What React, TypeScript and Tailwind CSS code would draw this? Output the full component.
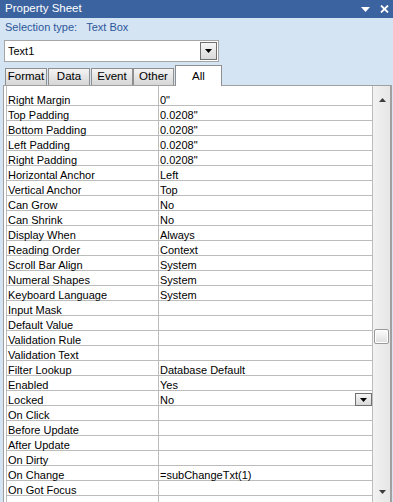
import React from "react";

const rows: { label: string; value: string; combo?: boolean }[] = [
  { label: "Right Margin", value: "0\"" },
  { label: "Top Padding", value: "0.0208\"" },
  { label: "Bottom Padding", value: "0.0208\"" },
  { label: "Left Padding", value: "0.0208\"" },
  { label: "Right Padding", value: "0.0208\"" },
  { label: "Horizontal Anchor", value: "Left" },
  { label: "Vertical Anchor", value: "Top" },
  { label: "Can Grow", value: "No" },
  { label: "Can Shrink", value: "No" },
  { label: "Display When", value: "Always" },
  { label: "Reading Order", value: "Context" },
  { label: "Scroll Bar Align", value: "System" },
  { label: "Numeral Shapes", value: "System" },
  { label: "Keyboard Language", value: "System" },
  { label: "Input Mask", value: "" },
  { label: "Default Value", value: "" },
  { label: "Validation Rule", value: "" },
  { label: "Validation Text", value: "" },
  { label: "Filter Lookup", value: "Database Default" },
  { label: "Enabled", value: "Yes" },
  { label: "Locked", value: "No", combo: true },
  { label: "On Click", value: "" },
  { label: "Before Update", value: "" },
  { label: "After Update", value: "" },
  { label: "On Dirty", value: "" },
  { label: "On Change", value: "=subChangeTxt(1)" },
  { label: "On Got Focus", value: "" },
  { label: "", value: "" },
];

const tabs = [
  { name: "Format", w: "w-[42px]", ml: "ml-[5px]" },
  { name: "Data", w: "w-[42px]", ml: "ml-[1px]" },
  { name: "Event", w: "w-[42px]", ml: "ml-[1px]" },
  { name: "Other", w: "w-[41px]", ml: "ml-0" },
];

const DownTriangle = ({ color = "#000" }: { color?: string }) => (
  <svg width="7" height="4" viewBox="0 0 7 4">
    <path d="M0 0 H7 L3.5 4 Z" fill={color} />
  </svg>
);

const DropButton = ({ className }: { className: string }) => (
  <div
    className={`flex items-center justify-center border border-[#707070] bg-gradient-to-b from-[#f6f6f6] to-[#d9d9d9] ${className}`}
  >
    <DownTriangle />
  </div>
);

export default function App() {
  return (
    <div className="w-[393px] h-[502px] overflow-hidden bg-[#d5e4f3] font-['Liberation_Sans',Arial,sans-serif] flex flex-col">
      {/* title bar */}
      <div className="h-[18px] shrink-0 bg-[#3b63a0] flex items-center pl-[5px] pr-[4px] text-white text-[11.5px]">
        <span>Property Sheet</span>
        <div className="ml-auto flex items-center gap-[10px]">
          <svg width="9" height="5" viewBox="0 0 9 5">
            <path d="M0 0 H9 L4.5 5 Z" fill="#fff" />
          </svg>
          <svg width="9" height="8" viewBox="0 0 9 8">
            <path d="M1 0.5 L8 7.5 M8 0.5 L1 7.5" stroke="#fff" strokeWidth="1.8" />
          </svg>
        </div>
      </div>

      {/* selection type */}
      <div className="h-[18px] shrink-0 flex items-center pl-[5px] text-[11px] text-[#2b579a]">
        <span>Selection type:</span>
        <span className="ml-[9px]">Text Box</span>
      </div>

      {/* object combo */}
      <div className="mt-[4px] ml-[4px] w-[215px] h-[22px] shrink-0 bg-white border border-[#a5a5a5] flex items-center pl-[3px] pr-[1px] text-[11px] text-black">
        <span>Text1</span>
        <DropButton className="ml-auto w-[17px] h-[18px]" />
      </div>

      {/* tabs */}
      <div className="mt-[3px] h-[20px] shrink-0 flex items-end text-[11.5px] text-black">
        {tabs.map((t) => (
          <div
            key={t.name}
            className={`${t.w} ${t.ml} h-[17px] border border-b-0 border-[#8f8f8f] bg-gradient-to-b from-[#f4f4f4] to-[#d6d6d6] flex items-center justify-center`}
          >
            {t.name}
          </div>
        ))}
        <div className="relative z-10 ml-[1px] w-[47px] h-[21px] -mb-px border border-b-0 border-[#8f8f8f] bg-white flex justify-center pt-[2px]">
          All
        </div>
      </div>

      {/* grid panel */}
      <div className="ml-[3px] w-[389px] flex-1 border border-b-0 border-[#a0a0a0] bg-white flex overflow-hidden text-[11px] text-black">
        <div className="pl-[2px] flex flex-col">
          <div className="flex h-[5px] shrink-0 border-l border-[#bcbcbc]">
            <div className="w-[152px] border-r border-[#bcbcbc]" />
            <div className="w-[214px] border-r border-[#bcbcbc]" />
          </div>
          {rows.map((r, i) => (
            <div key={i} className="flex h-[15px] shrink-0 border-l border-b border-[#bcbcbc]">
              <div className="w-[152px] border-r border-[#bcbcbc] pl-[1px] leading-[18px] whitespace-nowrap">
                {r.label}
              </div>
              <div className="w-[214px] border-r border-[#bcbcbc] pl-[1px] leading-[18px] whitespace-nowrap flex">
                <span>{r.value}</span>
                {r.combo && <DropButton className="ml-auto self-end w-[17px] h-[13px] mb-[-1px]" />}
              </div>
            </div>
          ))}
        </div>

        {/* scrollbar */}
        <div className="w-[18px] border-r border-[#a0a0a0] bg-gradient-to-r from-[#f2f2f2] to-[#e6e6e6] flex flex-col items-center shrink-0">
          <div className="h-[17px] shrink-0 flex items-end justify-center pb-[1px] pl-px">
            <svg width="7" height="4" viewBox="0 0 7 4">
              <path d="M0 4 H7 L3.5 0 Z" fill="#3c3c3c" />
            </svg>
          </div>
          <div className="mt-[226px] shrink-0 w-[15px] h-[15px] rounded-[2px] border border-[#9a9a9a] bg-gradient-to-b from-[#fdfdfd] to-[#dedede] shadow-[inset_0_0_0_1px_#ffffff]" />
          <div className="mt-[144px] h-[8px] shrink-0 flex items-center justify-center pl-px">
            <DownTriangle color="#3c3c3c" />
          </div>
        </div>
      </div>
    </div>
  );
}
